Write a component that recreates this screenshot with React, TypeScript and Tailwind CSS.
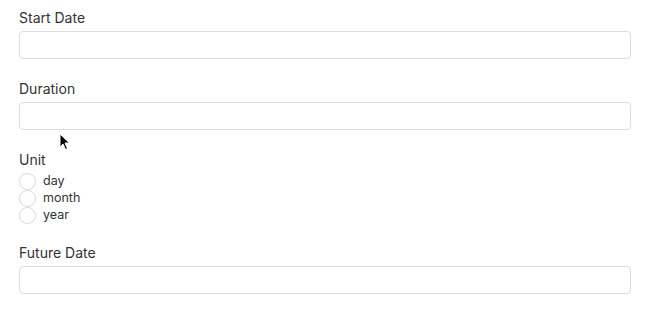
import React, { FC, useState } from 'react';

const font = { fontFamily: 'Inter, "Liberation Sans", sans-serif' };

const TextField: FC<{ label: string }> = ({ label }) => (
  <div className="mb-[20px]">
    <label className="block text-[14px] leading-5 text-[#333] mb-[3px]">{label}</label>
    <input
      type="text"
      className="block w-full h-[28px] rounded-[4px] border border-[#dcdcdc] bg-white px-2 text-[14px] focus:outline-none"
    />
  </div>
);

const units = ['day', 'month', 'year'];

const App: FC = () => {
  const [unit, setUnit] = useState<string>('');

  return (
    <div className="relative w-[650px] h-[310px] bg-white overflow-hidden" style={font}>
      <div className="px-[19px] pt-[8px]">
        <TextField label="Start Date" />
        <TextField label="Duration" />
        <div className="mb-[19px]">
          <div className="text-[14px] leading-5 text-[#333] mb-[3px]">Unit</div>
          <div className="flex flex-col">
            {units.map((u) => (
              <label key={u} className="flex items-center h-[17px] cursor-pointer" onClick={() => setUnit(u)}>
                <span className="w-[17px] h-[17px] rounded-full border border-[#d8d8d8] bg-white flex items-center justify-center">
                  {unit === u && <span className="w-[8px] h-[8px] rounded-full bg-[#333]" />}
                </span>
                <span className="ml-[7px] text-[12.5px] text-[#333]">{u}</span>
              </label>
            ))}
          </div>
        </div>
        <TextField label="Future Date" />
      </div>

      {/* mouse pointer */}
      <svg className="absolute left-[59px] top-[133px]" width="12" height="18" viewBox="0 0 12 18">
        <path d="M1 1 L1 14 L4 11 L6.5 16.5 L8.5 15.5 L6 10 L10.5 10 Z" fill="#000" stroke="#fff" strokeWidth="1" />
      </svg>
    </div>
  );
};

export default App;
